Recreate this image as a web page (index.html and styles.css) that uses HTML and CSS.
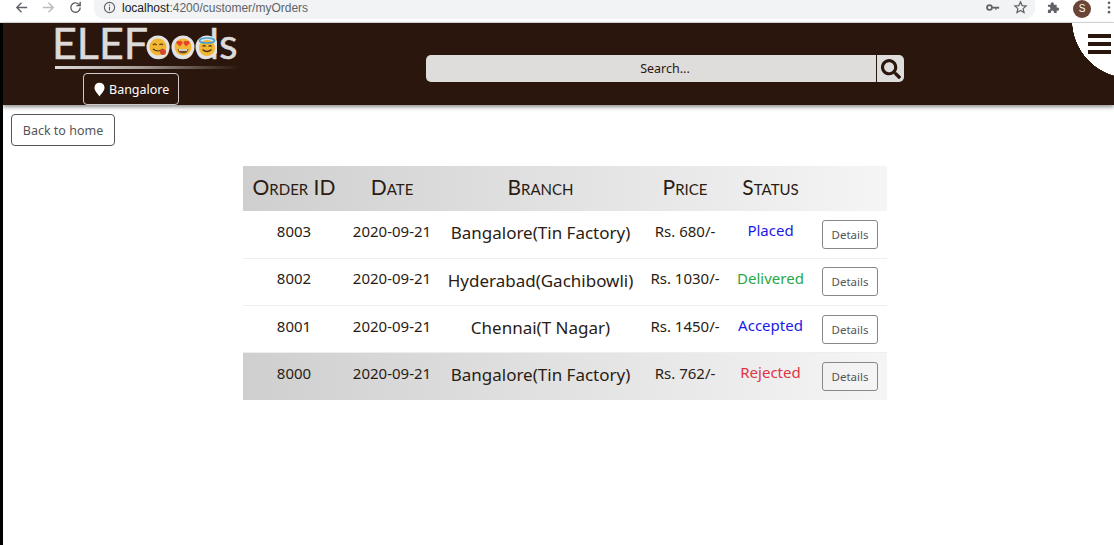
FILE: index.html
```html
<!DOCTYPE html>
<html lang="en">
<head>
<meta charset="utf-8">
<title>ELEFoods - My Orders</title>
<link rel="stylesheet" href="styles.css">
</head>
<body>
<div class="toolbar">
  <svg class="tb-icon nav-first" viewBox="0 0 16 16"><path d="M14 8H3M8 3L3 8l5 5" fill="none" stroke="#5f6368" stroke-width="1.5"/></svg>
  <svg class="tb-icon nav" viewBox="0 0 16 16"><path d="M2 8h11M8 3l5 5-5 5" fill="none" stroke="#b8babd" stroke-width="1.5"/></svg>
  <svg class="tb-icon nav" viewBox="0 0 16 16"><path d="M13 8a5 5 0 1 1-1.5-3.5L13 6M13 1.8V6H8.800" fill="none" stroke="#5f6368" stroke-width="1.5"/></svg>
  <div class="omnibox">
    <svg class="info" viewBox="0 0 14 14"><circle cx="7" cy="7" r="5.500" fill="none" stroke="#5f6368" stroke-width="1.200"/><path d="M7 6.200v4M7 3.800v1.300" stroke="#5f6368" stroke-width="1.200"/></svg>
    <span class="url"><b class="host">localhost</b>:4200/customer/myOrders</span>
    <svg class="key" viewBox="0 0 16 10"><circle cx="4" cy="5" r="2.800" fill="none" stroke="#5f6368" stroke-width="2"/><path d="M7 4h8v2.500h-1.500V6h-1.500v1.500h-1.500V6H7z" fill="#5f6368"/></svg>
    <svg class="star" viewBox="0 0 16 16"><path d="M8 2l1.800 4 4.200.4-3.200 2.800 1 4.200L8 11.200 4.200 13.400l1-4.200L2 6.400 6.200 6z" fill="none" stroke="#5f6368" stroke-width="1.300"/></svg>
  </div>
  <svg class="puzzle" viewBox="0 0 14 14"><path d="M1 4h3V3a1.700 1.700 0 0 1 3.400 0v1h3v3h1a1.700 1.700 0 0 1 0 3.400h-1V13H7.500v-1a1.700 1.700 0 0 0-3.400 0v1H1V9.500h1a1.700 1.700 0 0 0 0-3.400H1z" fill="#5f6368"/></svg>
  <span class="avatar">S</span>
  <svg class="dots" viewBox="0 0 4 14"><circle cx="2" cy="2" r="1.400" fill="#5f6368"/><circle cx="2" cy="7" r="1.400" fill="#5f6368"/><circle cx="2" cy="12" r="1.400" fill="#5f6368"/></svg>
</div>

<div class="page">
  <header class="site-header">
    <div class="brand">
      <div class="logo">
        <span class="logo-text">ELEFoods</span>
        <svg class="logo-emoji" viewBox="0 0 72 26">
          <g>
            <circle cx="13" cy="13" r="11.500" fill="#e4e3e2"/>
            <circle cx="13" cy="13" r="8.500" fill="#f2b632"/>
            <path d="M8 11q1.800-2 3.500 0M14.500 11q1.800-2 3.500 0" fill="none" stroke="#4a3216" stroke-width="1.200"/>
            <path d="M8 15q5 4 10 0" fill="none" stroke="#4a3216" stroke-width="1.200"/>
            <circle cx="18" cy="18" r="3" fill="#d8452e"/>
          </g>
          <g>
            <circle cx="38" cy="13" r="11.500" fill="#e4e3e2"/>
            <circle cx="38" cy="13" r="8.500" fill="#f2b632"/>
            <path d="M35 12.500l-3.500-3a1.900 1.900 0 0 1 3-2.200 1.900 1.900 0 0 1 3 2zM41 12.500l3.500-3a1.900 1.900 0 0 0-3-2.200 1.900 1.900 0 0 0-3 2z" fill="#e8412c"/>
            <path d="M32.500 15h11q-1 4.500-5.500 4.500T32.500 15z" fill="#6b4a2a"/>
            <path d="M33.500 15.200h9l-.5 1.500h-8z" fill="#f4f4f4"/>
          </g>
          <g>
            <circle cx="62" cy="13" r="11.500" fill="#e4e3e2"/>
            <circle cx="62" cy="14" r="8" fill="#f2b632"/>
            <ellipse cx="62" cy="6.500" rx="7.500" ry="2.500" fill="none" stroke="#3fa3d8" stroke-width="1.700"/>
            <path d="M57.500 12.500q1.600-1.800 3.200 0M63.500 12.500q1.600-1.800 3.200 0" fill="none" stroke="#4a3216" stroke-width="1.100"/>
            <path d="M57.500 15.500q4.500 4 9 0" fill="none" stroke="#4a3216" stroke-width="1.200"/>
          </g>
        </svg>
      </div>
      <div class="logo-rule"></div>
      <button class="location">
        <svg class="pin" viewBox="0 0 12 16"><path d="M6 0.500a5.500 5.500 0 0 1 5.500 5.500C11.500 9.500 7.500 13 6 15.500 4.500 13 .5 9.500.5 6A5.500 5.500 0 0 1 6 .5z" fill="#fff"/></svg>
        Bangalore
      </button>
    </div>
    <div class="search">
      <span class="search-input">Search...</span>
      <span class="search-btn">
        <svg viewBox="0 0 512 512"><path fill="#2a160d" d="M505 442.700L405.300 343c-4.500-4.500-10.600-7-17-7H372c27.600-35.300 44-79.700 44-128C416 93.100 322.900 0 208 0S0 93.100 0 208s93.100 208 208 208c48.300 0 92.700-16.400 128-44v16.300c0 6.400 2.500 12.500 7 17l99.700 99.700c9.400 9.400 24.600 9.400 33.900 0l28.300-28.300c9.400-9.400 9.400-24.600.1-34zM208 336c-70.700 0-128-57.200-128-128 0-70.700 57.200-128 128-128 70.700 0 128 57.200 128 128 0 70.700-57.200 128-128 128z"/></svg>
      </span>
    </div>
    <button class="menu" aria-label="Menu"><i></i><i></i><i></i></button>
  </header>

  <button class="back">Back to home</button>

  <table class="orders">
    <thead>
      <tr><th class="c-id">Order ID</th><th class="c-date">Date</th><th class="c-branch">Branch</th><th class="c-price">Price</th><th class="c-status">Status</th><th class="c-act"></th></tr>
    </thead>
    <tbody>
      <tr><td>8003</td><td>2020-09-21</td><td class="branch">Bangalore(Tin Factory)</td><td>Rs. 680/-</td><td class="status placed">Placed</td><td class="act"><button class="details">Details</button></td></tr>
      <tr><td>8002</td><td>2020-09-21</td><td class="branch">Hyderabad(Gachibowli)</td><td>Rs. 1030/-</td><td class="status delivered">Delivered</td><td class="act"><button class="details">Details</button></td></tr>
      <tr><td>8001</td><td>2020-09-21</td><td class="branch">Chennai(T Nagar)</td><td>Rs. 1450/-</td><td class="status placed">Accepted</td><td class="act"><button class="details">Details</button></td></tr>
      <tr class="rejected-row"><td>8000</td><td>2020-09-21</td><td class="branch">Bangalore(Tin Factory)</td><td>Rs. 762/-</td><td class="status rejected">Rejected</td><td class="act"><button class="details">Details</button></td></tr>
    </tbody>
  </table>
</div>
</body>
</html>
```

FILE: styles.css
```css
* { box-sizing: border-box; }

html, body {
  margin: 0;
  height: 100%;
  overflow: hidden;
  background: #fff;
  font-family: "Noto Sans", "Open Sans", sans-serif;
}

body {
  display: flex;
  flex-direction: column;
}

/* browser chrome */
.toolbar {
  flex: none;
  height: 23px;
  display: flex;
  align-items: flex-start;
  background: #fff;
  border-bottom: 1px solid #dadce0;
}

.tb-icon {
  flex: none;
  width: 15px;
  height: 15px;
}

.nav-first { margin-left: 14px; }
.nav { margin-left: 12px; }

.omnibox {
  flex: none;
  width: 941px;
  height: 19px;
  margin-left: 11px;
  padding-left: 9px;
  display: flex;
  align-items: flex-start;
  background: #f1f3f4;
  border-radius: 0 0 10px 10px;
}

.info {
  flex: none;
  width: 13px;
  height: 13px;
  margin-top: 1px;
}

.url {
  margin-left: 6px;
  font: 12px/16px "Liberation Sans", sans-serif;
  color: #5f6368;
}

.host {
  font-weight: 400;
  color: #202124;
}

.key {
  flex: none;
  width: 14px;
  height: 9px;
  margin: 3px 0 0 auto;
}

.star {
  flex: none;
  width: 15px;
  height: 15px;
  margin: 0 7px 0 13px;
}

.puzzle {
  flex: none;
  width: 13px;
  height: 13px;
  margin: 1px 0 0 12px;
}

.avatar {
  flex: none;
  width: 18px;
  height: 18px;
  margin-left: 13px;
  border-radius: 50%;
  background: #6a4436;
  color: #fff;
  font: 10px/17px "Liberation Sans", sans-serif;
  text-align: center;
}

.dots {
  flex: none;
  width: 4px;
  height: 13px;
  margin: 1px 0 0 16px;
}

/* page */
.page {
  flex: 1;
  min-height: 0;
  border-left: 3px solid #000;
  display: flex;
  flex-direction: column;
  align-items: flex-start;
}

.site-header {
  flex: none;
  position: relative;
  width: 100%;
  height: 82px;
  display: flex;
  align-items: flex-start;
  background: #2a160d;
  box-shadow: 0 2px 4px rgba(0, 0, 0, .45);
}

.brand {
  flex: none;
  width: 184px;
  margin-left: 52px;
}

.logo {
  position: relative;
  height: 43px;
}

.logo-text {
  display: block;
  margin-left: -3px;
  font: 400 43px/40px "Lato", sans-serif;
  white-space: nowrap;
  color: #dcdbda;
  -webkit-text-stroke: .5px #dcdbda;
}

.logo-emoji {
  position: absolute;
  left: 90px;
  top: 11px;
  width: 72px;
  height: 26px;
}

.logo-rule {
  height: 2.500px;
  width: 184px;
  background: linear-gradient(90deg, #dcdbda 0%, #a99f9a 45%, #2a160d 100%);
}

.location {
  display: flex;
  align-items: center;
  gap: 4px;
  height: 32px;
  margin: 4.500px 0 0 28px;
  padding: 0 10px;
  width: 96px;
  background: transparent;
  border: 1px solid #cfcac7;
  border-radius: 4px;
  color: #fff;
  font: 12.500px "Noto Sans", sans-serif;
}

.pin {
  flex: none;
  width: 11px;
  height: 15px;
}

.search {
  flex: none;
  display: flex;
  width: 478px;
  height: 27px;
  margin: 32px 0 0 187px;
  background: #dedddc;
  border-radius: 5px;
  overflow: hidden;
}

.search-input {
  flex: 1;
  padding-left: 28px;
  text-align: center;
  font-size: 12.500px;
  line-height: 27px;
  color: #2a160d;
}

.search-btn {
  flex: none;
  width: 28px;
  display: flex;
  align-items: center;
  justify-content: center;
  border-left: 1px solid #2a160d;
}

.search-btn svg {
  width: 20px;
  height: 20px;
}

.menu {
  position: absolute;
  right: 0;
  top: 0;
  width: 42px;
  height: 54px;
  border: 0;
  background: radial-gradient(circle 58px at 58px -3px, #fff 99.500%, transparent 100%);
  padding: 11px 0 0 16px;
  display: flex;
  flex-direction: column;
  gap: 4.500px;
}

.menu i {
  display: block;
  width: 23px;
  height: 3.500px;
  background: #2a160d;
}

.back {
  flex: none;
  width: 104px;
  height: 32px;
  margin: 9px 0 0 8px;
  background: #fff;
  border: 1px solid #555;
  border-radius: 4px;
  color: #555;
  font: 12.500px "Noto Sans", sans-serif;
}

/* orders */
.orders {
  flex: none;
  width: 644px;
  margin: 20px 0 0 240px;
  border-collapse: collapse;
  table-layout: fixed;
  color: #2a1c14;
}

.c-id { width: 102px; }
.c-date { width: 94px; }
.c-branch { width: 203px; }
.c-price { width: 86px; }
.c-status { width: 85px; }
.c-act { width: 74px; }

.orders thead tr {
  height: 45px;
  background: linear-gradient(90deg, #cfcfcf 0%, #f5f5f5 100%);
}

.orders th {
  padding: 0 0 4px;
  font: 400 21px "Lato", sans-serif;
  font-variant: small-caps;
  color: #2a1c14;
  text-align: center;
  vertical-align: middle;
}

.orders tbody tr {
  height: 47.300px;
  border-bottom: 1px solid #eeeeee;
}

.orders td {
  padding: 9.500px 0 0;
  font-size: 15px;
  line-height: 20px;
  text-align: center;
  vertical-align: top;
}

.orders td.branch {
  padding-top: 10px;
  font-size: 17px;
  line-height: 24px;
}

.orders td.status {
  padding-top: 9px;
  font-size: 15px;
}

.orders td.act {
  padding: 8.500px 0 0 9px;
  text-align: left;
}

.placed { color: #1a1ae6; }
.delivered { color: #28a745; }
.rejected { color: #dc3545; }

.orders tbody tr.rejected-row {
  border-bottom: 0;
  background: linear-gradient(90deg, #cfcfcf 0%, #f5f5f5 100%);
}

.details {
  width: 56px;
  height: 29px;
  padding: 0;
  background: transparent;
  border: 1px solid #888;
  border-radius: 3px;
  color: #555;
  font: 11.500px "Noto Sans", sans-serif;
}
```
